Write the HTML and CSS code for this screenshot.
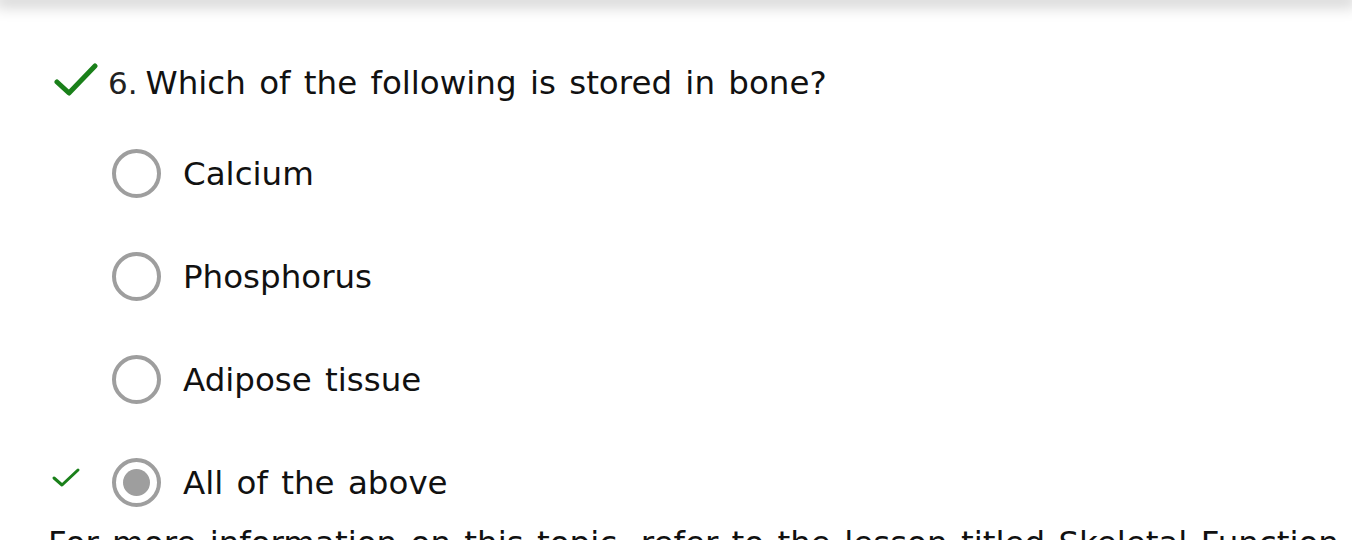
FILE: index.html
```html
<!DOCTYPE html>
<html lang="en">
<head>
<meta charset="utf-8">
<title>Quiz question</title>
<link rel="stylesheet" href="styles.css">
</head>
<body>
<header class="topbar"></header>
<main class="quiz">
  <div class="question">
    <svg class="check-big" viewBox="0 0 44 36" width="44" height="36"><path d="M3 20 L15 31 L41 4" fill="none" stroke="#1a801a" stroke-width="5" stroke-linecap="round" stroke-linejoin="round"/></svg>
    <span class="qnum">6.</span>
    <span class="qtext">Which of the following is stored in bone?</span>
  </div>
  <ul class="options">
    <li class="option"><span class="mark"></span><span class="radio"></span><span class="label">Calcium</span></li>
    <li class="option"><span class="mark"></span><span class="radio"></span><span class="label">Phosphorus</span></li>
    <li class="option"><span class="mark"></span><span class="radio"></span><span class="label">Adipose tissue</span></li>
    <li class="option"><span class="mark"><svg viewBox="0 0 30 22" width="30" height="22"><path d="M3 12 L11 19 L27 4" fill="none" stroke="#1a801a" stroke-width="3" stroke-linecap="round" stroke-linejoin="round"/></svg></span><span class="radio checked"></span><span class="label">All of the above</span></li>
  </ul>
  <p class="info">For more information on this topic, refer to the lesson titled Skeletal Function and Structure.</p>
</main>
</body>
</html>
```
FILE: styles.css
```css
html, body {
  margin: 0;
  padding: 0;
  background: #fff;
}
body {
  font-family: "DejaVu Sans", Verdana, sans-serif;
  color: #111;
  overflow: hidden;
  height: 540px;
  word-spacing: 3px;
}
.topbar {
  height: 0;
  box-shadow: 0 0 16px 5px rgba(0, 0, 0, 0.25);
}
.quiz {
  padding-top: 62px;
}
.question {
  display: flex;
  align-items: center;
  padding-left: 54px;
  font-size: 32.5px;
  height: 42px;
}
.check-big {
  flex: none;
  margin-top: -6px;
}
.qnum {
  margin-left: 10px;
  font-size: 31px;
  color: #222;
}
.qtext {
  margin-left: 8px;
}
.options {
  list-style: none;
  margin: 18px 0 0;
  padding: 0;
}
.option {
  display: flex;
  align-items: center;
  height: 103px;
  font-size: 32.5px;
}
.mark {
  width: 112px;
  display: flex;
  padding-left: 51px;
  padding-bottom: 12px;
  box-sizing: border-box;
  flex: none;
}
.radio {
  flex: none;
  width: 49px;
  height: 49px;
  box-sizing: border-box;
  border: 4.5px solid #9e9e9e;
  border-radius: 50%;
  display: flex;
  align-items: center;
  justify-content: center;
}
.radio.checked::after {
  content: "";
  width: 27px;
  height: 27px;
  border-radius: 50%;
  background: #9e9e9e;
}
.label {
  margin-left: 22px;
}
.info {
  margin: -10px 0 0;
  padding-left: 48px;
  font-size: 32.5px;
  white-space: nowrap;
}
```
